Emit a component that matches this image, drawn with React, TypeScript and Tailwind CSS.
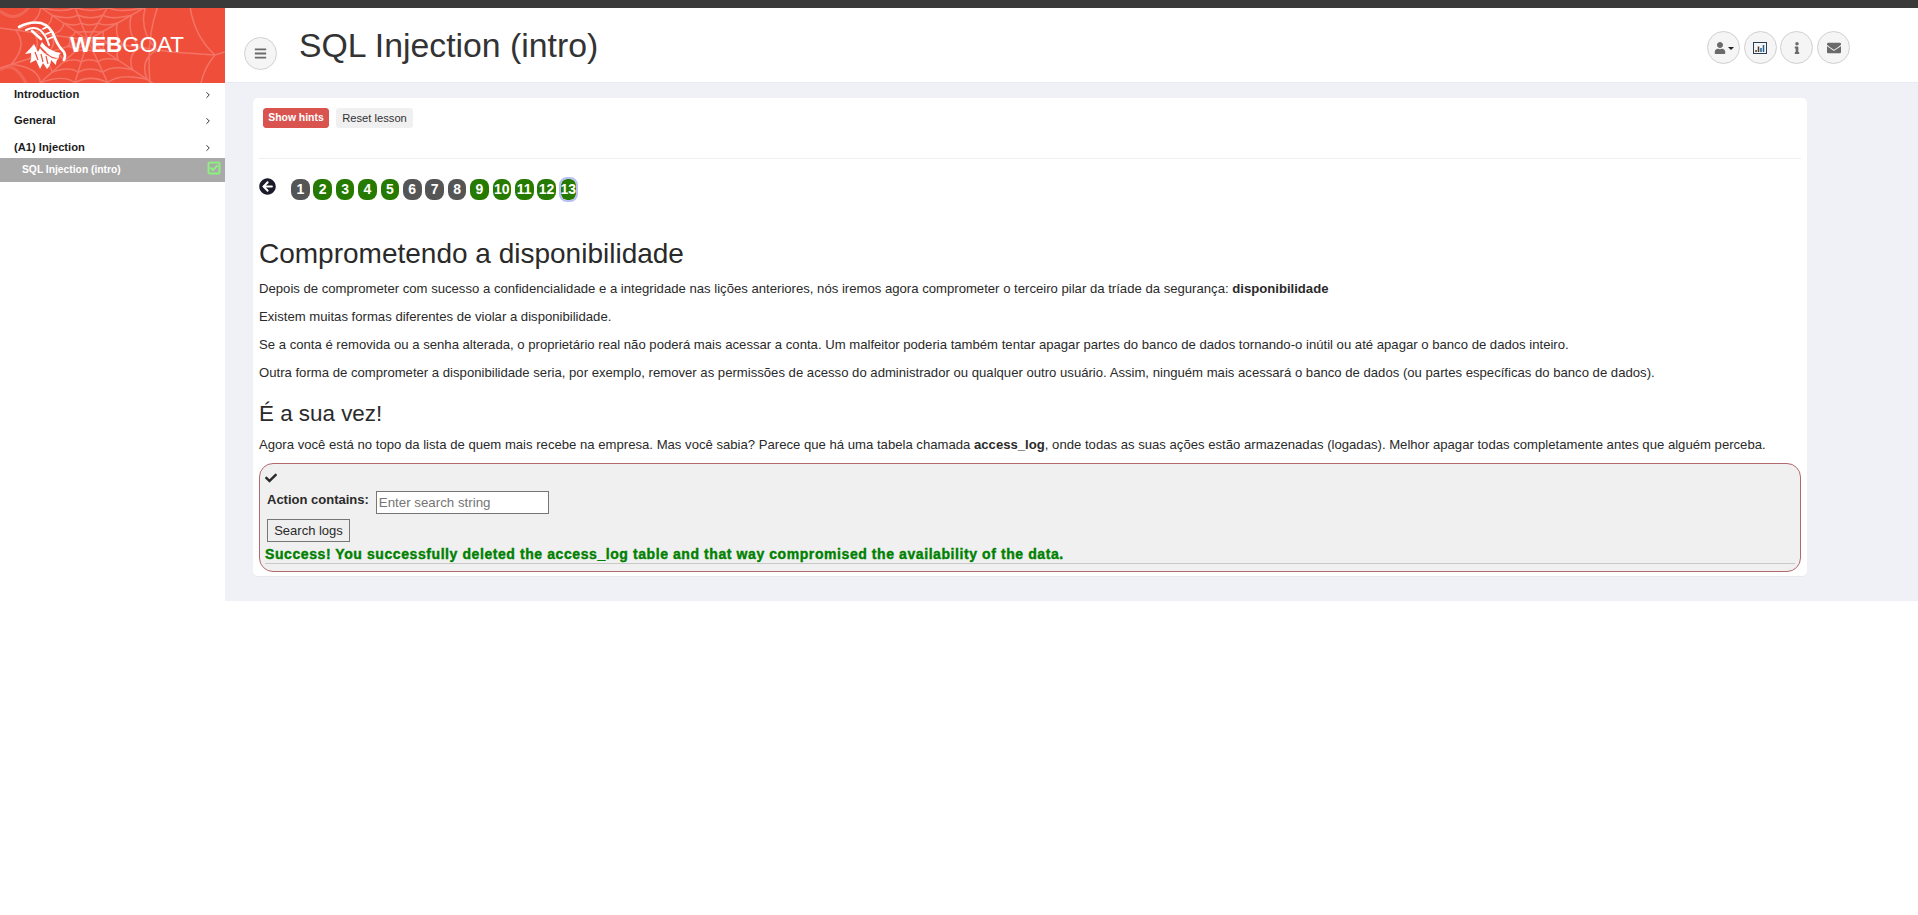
import { FaArrowCircleLeft, FaBars, FaCheck, FaEnvelope, FaInfo, FaRegCheckSquare, FaUser } from "react-icons/fa";
import { ChevronRight } from "lucide-react";
import { ReactNode } from "react";

const steps = [
  { n: 1, done: false },
  { n: 2, done: true },
  { n: 3, done: true },
  { n: 4, done: true },
  { n: 5, done: true },
  { n: 6, done: false },
  { n: 7, done: false },
  { n: 8, done: false },
  { n: 9, done: true },
  { n: 10, done: true },
  { n: 11, done: true },
  { n: 12, done: true },
];

// web strands, centre at 88,32
const spokes = [
  [0, 20],
  [-6, 62],
  [30, 84],
  [72, 84],
  [112, 84],
  [160, 80],
  [172, 44],
  [158, -8],
  [112, -8],
  [72, -8],
  [30, -8],
];

const ringPath = (r: number) => {
  const pts = spokes.map(([x, y]) => [88 + (x - 88) * r, 32 + (y - 32) * r]);
  return pts
    .map(([x, y], i) => {
      const [px, py] = pts[(i + pts.length - 1) % pts.length];
      const cx = 88 + ((x + px) / 2 - 88) * 0.8;
      const cy = 32 + ((y + py) / 2 - 32) * 0.8;
      return `${i === 0 ? `M${px} ${py} ` : ""}Q${cx} ${cy} ${x} ${y}`;
    })
    .join(" ");
};

const WebBackground = () => (
  <svg viewBox="0 0 225 75" className="absolute inset-0 h-full w-full" fill="none" stroke="#f47465" strokeWidth="1.5">
    {spokes.map(([x, y]) => (
      <path key={`${x}-${y}`} d={`M88 32 L${x} ${y}`} />
    ))}
    <path d={ringPath(0.22)} />
    <path d={ringPath(0.42)} />
    <path d={ringPath(0.62)} />
    <path d={ringPath(0.82)} />
    <path d="M172 44 L215 47 M190 -2 Q194 28 215 47 L225 44 M215 47 Q204 60 201 75 M158 -2 Q146 30 150 75" />
    <path d="M0 3 Q16 16 30 -2 M0 62 Q14 52 26 75" strokeWidth="3" opacity="0.6" />
  </svg>
);

const GoatLogo = () => (
  <svg viewBox="0 0 56 54" className="absolute top-[10px] left-[14px] h-[54px] w-[56px]">
    <g fill="none" stroke="#fff" strokeLinecap="round">
      <path strokeWidth="2.6" d="M5 9 Q16 3 27 5 Q37 8 41 20 Q44 28 50 34 Q52 38 50 42" />
      <path strokeWidth="2" d="M12 12 Q20 8 26 12 Q32 17 35 27" />
      <path strokeWidth="2.6" d="M18 13 L27 21" />
      <path strokeWidth="1.6" d="M29 11 L33 9 M32 16 L37 14 M34 21 L39 19" />
    </g>
    <path fill="#fff" d="M28 24 Q34 33 47 35 Q44 37 45 40 Q38 40 34 36 Q30 32 26 28Z" />
    <path
      fill="#fff"
      d="M20 26 Q16 31 11 36 L17 35 Q18 40 16 45 L22 42 L26 51 L29 45 L33 51 Q37 47 37 42 L42 47 Q42 42 45 40 Q39 42 35 38 Q29 35 26 30 L24 34 Z"
    />
    <path fill="none" stroke="#ef4f3a" strokeWidth="1.2" d="M21 34 L24 42 M27 36 L29 44 M32 38 L34 46" />
  </svg>
);

const ChartIcon = () => (
  <svg viewBox="0 0 14 12" className="h-[12px] w-[14px]" fill="none">
    <rect x="0.5" y="0.5" width="13" height="11" stroke="#2c3e55" />
    <path d="M3 10 V8 M5.5 10 V4.5" stroke="#4a3a30" strokeWidth="1.5" />
    <path d="M8 10 V6 M10.5 10 V3" stroke="#1f5f9a" strokeWidth="1.5" />
  </svg>
);

const NavRow = ({ label, className }: { label: string; className: string }) => (
  <div className={`flex items-center justify-between pl-[14px] pr-[12px] text-[11.2px] leading-none font-bold text-[#1c1c1c] ${className}`}>
    <span>{label}</span>
    <ChevronRight size={10} strokeWidth={2.4} className="text-[#333]" />
  </div>
);

const RoundButton = ({ children, className = "" }: { children: ReactNode; className?: string }) => (
  <div className={`flex h-[33px] w-[33px] items-center justify-center rounded-full border border-[#d0d0d0] bg-[#f5f5f5] text-[#6a6a6a] ${className}`}>
    {children}
  </div>
);

const Step = ({ n, done }: { n: number; done: boolean }) => (
  <div className={`flex h-[21px] w-[18.6px] items-center justify-center rounded-[8px] text-[14px] font-bold text-white ${done ? "bg-[#277a00]" : "bg-[#555555]"}`}>
    {n}
  </div>
);

export default function App() {
  return (
    <div className="min-h-[915px] bg-white font-['Liberation_Sans',Arial,sans-serif] text-[#2a2a2a]">
      <div className="h-2 bg-[#3a3a3a]" />
      <div className="flex">
        <aside className="w-[225px] shrink-0">
          <div className="relative flex h-[75px] items-center overflow-hidden bg-[#ef4f3a] pl-[70px]">
            <WebBackground />
            <GoatLogo />
            <div className="relative text-[22.4px] leading-none text-white">
              <span className="font-bold">WEB</span>GOAT
            </div>
          </div>
          <NavRow label="Introduction" className="h-[22px] pt-[2px]" />
          <NavRow label="General" className="h-[27px] pt-[5px]" />
          <NavRow label="(A1) Injection" className="h-[26px] pt-[6px]" />
          <div className="flex h-[24px] items-center justify-between bg-[#a9a9a9] pb-[1px] pl-[22px] pr-[4px] text-[10.3px] font-bold text-white">
            <span>SQL Injection (intro)</span>
            <FaRegCheckSquare className="mb-[4px] stroke-[20] text-[14px] text-[#8ef37f]" />
          </div>
        </aside>

        <div className="min-w-0 flex-1">
          <header className="flex h-[75px] border-b border-[#e8eaef] bg-white">
            <RoundButton className="mt-[29px] ml-[19px]">
              <FaBars className="text-[13px]" />
            </RoundButton>
            <h1 className="mt-[17px] ml-[22px] text-[33.8px] leading-[40px] font-normal text-[#333]">SQL Injection (intro)</h1>
            <div className="mt-[23px] ml-[1109px] flex gap-[3.6px]">
              <RoundButton className="gap-[2px]">
                <FaUser className="text-[12px]" />
                <span className="mt-[2px] h-0 w-0 border-x-[3px] border-t-[3px] border-x-transparent border-t-[#222]" />
              </RoundButton>
              <RoundButton>
                <ChartIcon />
              </RoundButton>
              <RoundButton>
                <FaInfo className="text-[12px]" />
              </RoundButton>
              <RoundButton>
                <FaEnvelope className="text-[14px]" />
              </RoundButton>
            </div>
          </header>

          <main className="h-[518px] bg-[#eff1f6] pt-[15px] pl-[28px]">
            <div className="h-[479px] w-[1554px] rounded-[5px] border-b border-[#e8e8ea] bg-white px-[6px] pt-[10px] text-[13.13px]">
              <div className="flex h-[51px] gap-[7px] border-b border-[#f0f0f0] pl-[4px]">
                <button className="h-[20px] w-[66px] rounded-[3px] border border-[#d9534f] bg-[#d9534f] text-[10.4px] font-bold text-white">Show hints</button>
                <button className="h-[20px] w-[77px] rounded-[3px] bg-[#f0f0f0] text-[11.2px] text-[#333]">Reset lesson</button>
              </div>
              <div className="mt-[18px] flex items-start">
                <FaArrowCircleLeft className="mt-[1px] text-[17px] text-[#1a1a2a]" />
                <div className="ml-[15px] flex gap-[3.8px] pt-[2px]">
                  {steps.map((s) => (
                    <Step key={s.n} n={s.n} done={s.done} />
                  ))}
                  <div className="ml-[1px] flex h-[21px] w-[15px] items-center justify-center rounded-[6px] bg-[#277a00] text-[14px] font-bold text-white outline-2 outline-[#b9c0f5]">
                    13
                  </div>
                </div>
              </div>

              <h2 className="mt-[37px] text-[28px] leading-[33px] font-normal">Comprometendo a disponibilidade</h2>
              <p className="mt-[10px] leading-[17px]">
                Depois de comprometer com sucesso a confidencialidade e a integridade nas lições anteriores, nós iremos agora comprometer o terceiro pilar da tríade da segurança: <b>disponibilidade</b>
              </p>
              <p className="mt-[11px] leading-[17px]">Existem muitas formas diferentes de violar a disponibilidade.</p>
              <p className="mt-[11px] leading-[17px]">
                Se a conta é removida ou a senha alterada, o proprietário real não poderá mais acessar a conta. Um malfeitor poderia também tentar apagar partes do banco de dados tornando-o inútil ou até apagar o banco de dados inteiro.
              </p>
              <p className="mt-[11px] leading-[17px]">
                Outra forma de comprometer a disponibilidade seria, por exemplo, remover as permissões de acesso do administrador ou qualquer outro usuário. Assim, ninguém mais acessará o banco de dados (ou partes específicas do banco de dados).
              </p>
              <h3 className="mt-[19px] text-[22.4px] leading-[27px] font-normal">É a sua vez!</h3>
              <p className="mt-[9px] leading-[17px]">
                Agora você está no topo da lista de quem mais recebe na empresa. Mas você sabia? Parece que há uma tabela chamada <b>access_log</b>, onde todas as suas ações estão armazenadas (logadas). Melhor apagar todas completamente antes que alguém perceba.
              </p>

              <div className="mt-[10px] h-[109px] rounded-[14px] border border-[#b06a6e] bg-[#f0f0f0] px-[5px] pt-[8px]">
                <FaCheck className="text-[12px] text-[#2a2a2a]" />
                <div className="mt-[7px] flex items-start pl-[2px]">
                  <label className="text-[13px] leading-[17px] font-bold">Action contains:</label>
                  <input
                    placeholder="Enter search string"
                    className="ml-[7px] h-[23px] w-[173px] border border-[#767676] bg-white px-[2px] text-[13.3px] outline-none placeholder:text-[#757575]"
                  />
                </div>
                <button className="mt-[5px] ml-[2px] block h-[23px] w-[83px] border border-[#767676] bg-[#efefef] text-[13px]">Search logs</button>
                <div className="mt-[5px] text-[14px] leading-[14px] font-bold tracking-[0.58px] text-[#008000] [-webkit-text-stroke:0.4px_#008000]">
                  Success! You successfully deleted the access_log table and that way compromised the availability of the data.
                </div>
                <div className="mt-[2px] border-t border-[#c8c8c8]" />
              </div>
            </div>
          </main>
        </div>
      </div>
    </div>
  );
}
